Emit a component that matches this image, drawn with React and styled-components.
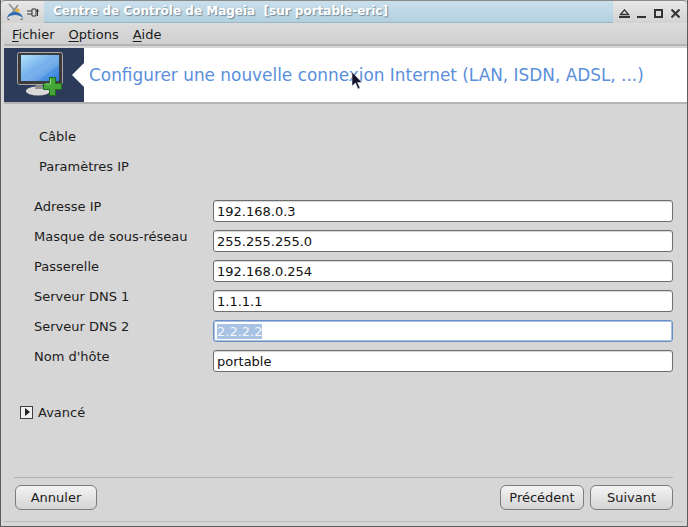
import React from 'react';
import styled, { createGlobalStyle } from 'styled-components';

const GlobalStyle = createGlobalStyle`
	html, body {
		margin: 0;
		padding: 0;
		background: #d6d6d6;
	}
	* {
		box-sizing: border-box;
	}
`;

const Window = styled.div`
	width: 688px;
	height: 527px;
	display: flex;
	flex-direction: column;
	position: relative;
	overflow: hidden;
	background: #d6d6d6;
	border-left: 1px solid #5c5c5c;
	border-right: 1px solid #5c5c5c;
	border-bottom: 1px solid #5c5c5c;
	font-family: "DejaVu Sans", sans-serif;
	font-size: 13px;
	color: #1c1c1c;
`;

const TitleBar = styled.div`
	height: 23px;
	flex: none;
	display: flex;
	align-items: stretch;
	background: linear-gradient(#e8e8e8, #d2d2d2);
	border-top: 1px solid #8a8a8a;
	border-radius: 4px 4px 0 0;
`;

const TitleIcons = styled.div`
	width: 43px;
	flex: none;
	display: flex;
	align-items: center;
	padding-left: 5px;
	gap: 3px;
`;

const TitleText = styled.div`
	flex: 1;
	background: linear-gradient(#c9dfec, #b3d0e0);
	border-bottom: 1px solid #9db6c4;
	padding-left: 9px;
	line-height: 21px;
	font-weight: bold;
	font-size: 12px;
	color: #fff;
	text-shadow: 1px 1px 1px #6d8899;
	white-space: pre;
`;

const WindowButtons = styled.div`
	width: 74px;
	flex: none;
	display: flex;
	align-items: center;
	justify-content: flex-end;
	gap: 8px;
	padding: 3px 7px 0 0;
`;

const MenuBar = styled.div`
	height: 23px;
	flex: none;
	margin-left: 3px;
	padding: 1px 0 0 8px;
	display: flex;
	align-items: center;
	gap: 14px;
	border-bottom: 2px solid #b4b4b4;
	background: linear-gradient(#dcdcdc, #cfcfcf);
`;

const MenuItem = styled.span`
	u {
		text-underline-offset: 2px;
	}
`;

const Banner = styled.div`
	height: 56px;
	flex: none;
	margin: 2px 0 0 3px;
	display: flex;
	background: #fff;
	border-bottom: 2px solid #b4b4b4;
`;

const BannerIcon = styled.div`
	width: 80px;
	flex: none;
	position: relative;
	display: flex;
	align-items: center;
	padding-left: 13px;
	background: #2c3b59;
	&::after {
		content: '';
		position: absolute;
		right: 0;
		top: 15px;
		border-style: solid;
		border-width: 12px 12px 12px 0;
		border-color: transparent #fff transparent transparent;
	}
`;

const BannerTitle = styled.div`
	flex: 1;
	padding: 0 0 1px 5px;
	display: flex;
	align-items: center;
	font-size: 16.9px;
	color: #5a8fdc;
	white-space: nowrap;
`;

const Content = styled.div`
	flex: 1;
	display: flex;
	flex-direction: column;
	margin-left: 3px;
	padding: 21px 14px 0 30px;
`;

const SectionLabel = styled.div`
	height: 30px;
	padding-left: 5px;
	line-height: 24px;
`;

const Form = styled.div`
	display: flex;
	flex-direction: column;
	gap: 8px;
	margin-top: 15px;
`;

const Row = styled.div`
	height: 22px;
	display: flex;
	align-items: flex-start;
`;

const FieldLabel = styled.label`
	width: 179px;
	flex: none;
	line-height: 14px;
	white-space: nowrap;
`;

const Field = styled.div`
	flex: 1;
	height: 22px;
	padding-left: 3px;
	line-height: 21px;
	background: #fff;
	color: #111;
	border: 1px solid ${(p) => (p.$focused ? '#6a8fc4' : '#6e6e6e')};
	border-radius: 3px;
	box-shadow: ${(p) => (p.$focused ? '0 0 0 1px #a9c0df inset' : 'inset 0 1px 1px #d8d8d8')};
`;

const Selected = styled.span`
	background: #a8c2e4;
	color: #f4f7fb;
`;

const Expander = styled.div`
	display: flex;
	align-items: center;
	gap: 5px;
	margin: 32px 0 0 -14px;
	height: 16px;
`;

const ExpanderBox = styled.span`
	width: 13px;
	height: 13px;
	display: flex;
	align-items: center;
	justify-content: center;
	background: #f0f0f0;
	border: 1px solid #3e3e3e;
	&::before {
		content: '';
		margin-left: 1px;
		border-style: solid;
		border-width: 4px 0 4px 5px;
		border-color: transparent transparent transparent #222;
	}
`;

const Spacer = styled.div`
	flex: 1;
`;

const Separator = styled.div`
	height: 1px;
	margin-left: -20px;
	background: #b2b2b2;
`;

const Footer = styled.div`
	display: flex;
	justify-content: space-between;
	margin: 7px 0 0 -19px;
`;

const ButtonGroup = styled.div`
	display: flex;
	gap: 6px;
`;

const Button = styled.button`
	width: ${(p) => p.$width}px;
	height: 25px;
	padding: 0;
	font: inherit;
	color: #1c1c1c;
	background: linear-gradient(#f4f4f4, #d4d4d4);
	border: 1px solid #7c7c7c;
	border-radius: 6px;
`;

const BottomLine = styled.div`
	height: 1px;
	margin: 11px -10px 4px -30px;
	background: #bdbdbd;
`;

const Cursor = styled.svg`
	position: absolute;
	left: 350px;
	top: 72px;
`;

const PlugIcon = () => (
	<svg width="13" height="9" viewBox="0 0 13 9">
		<path d="M0 3h5M0 6h5" stroke="#333" strokeWidth="1" />
		<path d="M5 1h4v7H5zM9 3h3M10.500 1v7" fill="#ddd" stroke="#333" strokeWidth="1" />
	</svg>
);

const MageiaIcon = () => (
	<svg width="18" height="18" viewBox="0 0 18 18">
		<path d="M3 1l7 8M12 2L6 10" stroke="#8a8a8a" strokeWidth="1.500" />
		<path d="M9 7l3-2 2 3-3 2z" fill="#e9b23c" />
		<path d="M1 15c1-4 4-6 8-6s7 2 8 6c-2-2-5-3-8-3s-6 1-8 3z" fill="#2f6db0" />
		<path d="M1 15l1 2h2zM17 15l-1 2h-2z" fill="#444" />
	</svg>
);

const ShadeIcon = () => (
	<svg width="11" height="9" viewBox="0 0 11 9" style={{ marginRight: -1 }}>
		<path d="M5.500 0.800L9.500 5.500h-8z" fill="none" stroke="#333" strokeWidth="1.300" />
		<path d="M0 8h11" stroke="#333" strokeWidth="2" />
	</svg>
);

const MinIcon = () => (
	<svg width="9" height="9" viewBox="0 0 9 9">
		<path d="M0 8h9" stroke="#333" strokeWidth="2" />
	</svg>
);

const MaxIcon = () => (
	<svg width="9" height="9" viewBox="0 0 9 9">
		<rect x="1" y="1" width="7" height="7" fill="none" stroke="#333" strokeWidth="2" />
	</svg>
);

const CloseIcon = () => (
	<svg width="9" height="9" viewBox="0 0 9 9">
		<path d="M0.500 0.500l8 8M8.500 0.500l-8 8" stroke="#333" strokeWidth="2" />
	</svg>
);

const MonitorIcon = () => (
	<svg width="46" height="46" viewBox="0 0 46 46">
		<defs>
			<linearGradient id="screen" x1="0" y1="0" x2="1" y2="1">
				<stop offset="0" stopColor="#b4e2fa" />
				<stop offset="1" stopColor="#2c78dc" />
			</linearGradient>
		</defs>
		<ellipse cx="21" cy="39" rx="12" ry="4.500" fill="#d8d8d8" />
		<path d="M19 31h6l1 6h-8z" fill="#8d8d8d" />
		<rect x="0.500" y="0.500" width="45" height="32" rx="2" fill="#3c3c3c" stroke="#a8a8a8" />
		<rect x="4" y="3" width="38" height="26" fill="url(#screen)" />
		<path d="M4 29L42 3v10L20 29z" fill="#ffffff" opacity="0.100" />
		<path d="M32.500 25.500h6v6h6v6h-6v6h-6v-6h-6v-6h6z" fill="#43a636" stroke="#1f6b20" />
		<path d="M33.500 27v5h-5" fill="none" stroke="#9ad68c" />
	</svg>
);

const CursorIcon = () => (
	<path d="M1 0v14l3.500-3 2.500 6 2-1-2.500-5.500H11z" fill="#14142e" stroke="#f2f2f2" strokeWidth="0.500" />
);

const fields = [
	['Adresse IP', '192.168.0.3'],
	['Masque de sous-réseau', '255.255.255.0'],
	['Passerelle', '192.168.0.254'],
	['Serveur DNS 1', '1.1.1.1'],
	['Serveur DNS 2', '2.2.2.2', true],
	["Nom d'hôte", 'portable'],
];

const App = () => {
	return (
		<Window>
			<GlobalStyle />
			<TitleBar>
				<TitleIcons>
					<MageiaIcon />
					<PlugIcon />
				</TitleIcons>
				<TitleText>Centre de Contrôle de Mageia  [sur portable-eric]</TitleText>
				<WindowButtons>
					<ShadeIcon />
					<MinIcon />
					<MaxIcon />
					<CloseIcon />
				</WindowButtons>
			</TitleBar>
			<MenuBar>
				<MenuItem><u>F</u>ichier</MenuItem>
				<MenuItem><u>O</u>ptions</MenuItem>
				<MenuItem><u>A</u>ide</MenuItem>
			</MenuBar>
			<Banner>
				<BannerIcon>
					<MonitorIcon />
				</BannerIcon>
				<BannerTitle>Configurer une nouvelle connexion Internet (LAN, ISDN, ADSL, ...)</BannerTitle>
			</Banner>
			<Content>
				<SectionLabel>Câble</SectionLabel>
				<SectionLabel>Paramètres IP</SectionLabel>
				<Form>
					{fields.map(([label, value, focused]) => (
						<Row key={label}>
							<FieldLabel>{label}</FieldLabel>
							<Field $focused={focused}>
								{focused ? <Selected>{value}</Selected> : value}
							</Field>
						</Row>
					))}
				</Form>
				<Expander>
					<ExpanderBox />
					Avancé
				</Expander>
				<Spacer />
				<Separator />
				<Footer>
					<Button $width={82}>Annuler</Button>
					<ButtonGroup>
						<Button $width={84}>Précédent</Button>
						<Button $width={83}>Suivant</Button>
					</ButtonGroup>
				</Footer>
				<BottomLine />
			</Content>
			<Cursor width="12" height="18" viewBox="0 0 12 18">
				<CursorIcon />
			</Cursor>
		</Window>
	);
};

export default App;
